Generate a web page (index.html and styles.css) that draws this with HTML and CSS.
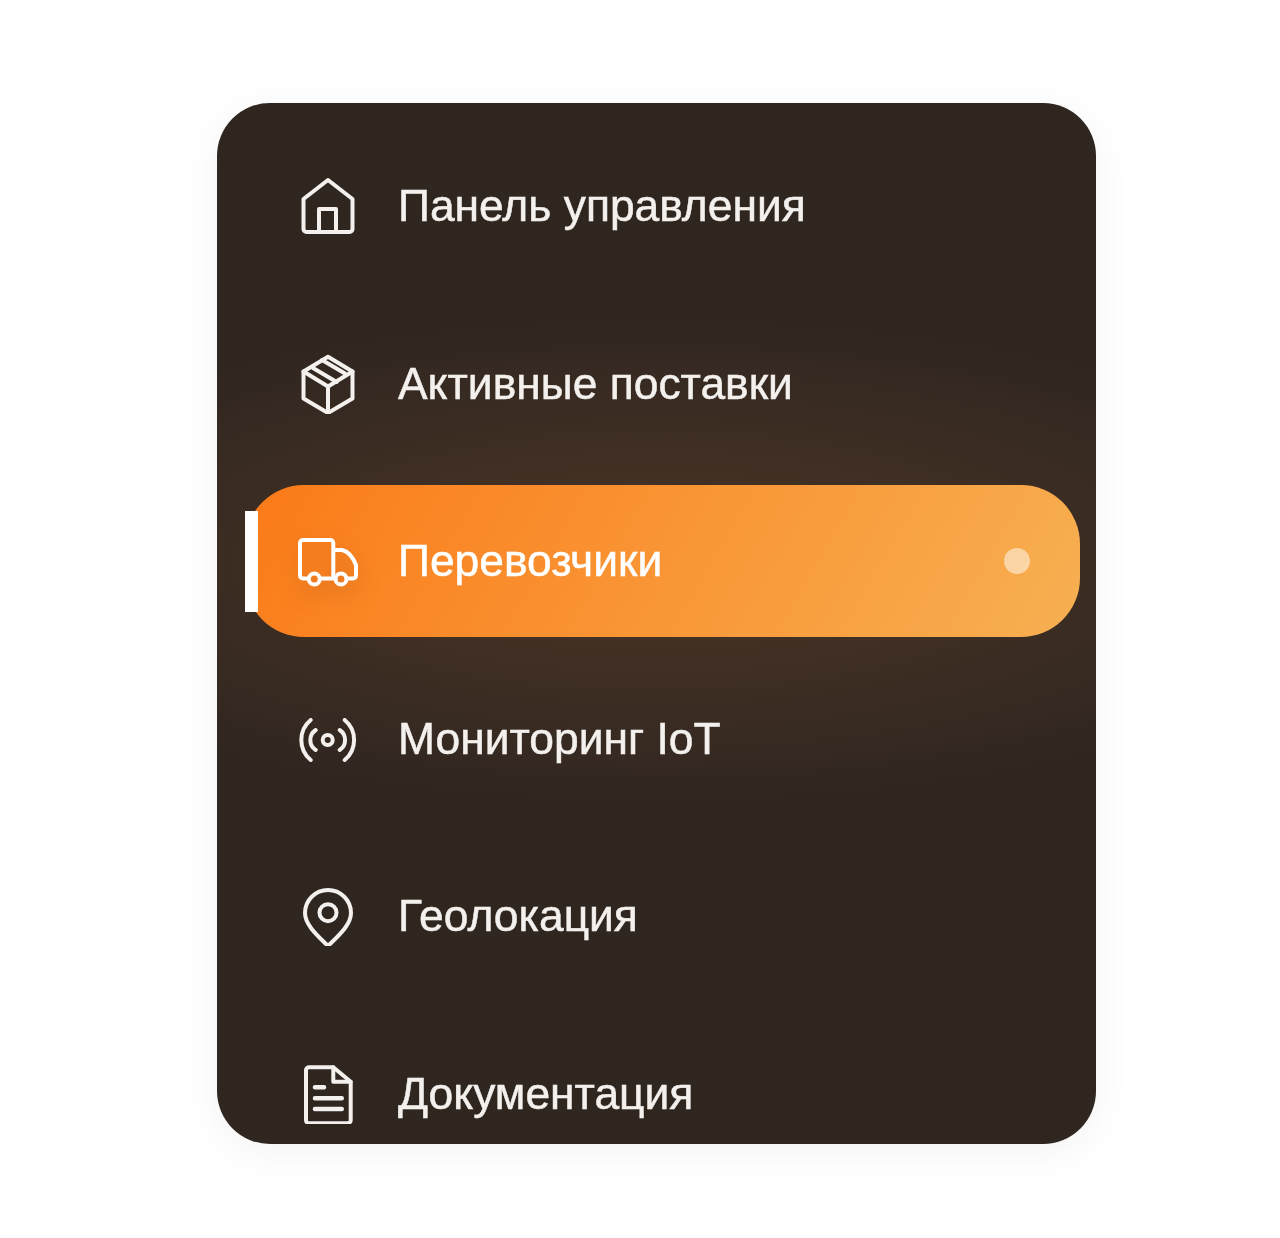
FILE: index.html
```html
<!DOCTYPE html>
<html lang="ru">
<head>
  <meta charset="UTF-8">
  <title>Перевозчики</title>
  <link rel="stylesheet" href="styles.css">
</head>
<body>
  <nav class="sidebar">
    <a class="nav-item">
      <svg class="nav-icon" viewBox="0 0 60 60"><path d="M5.500 23 30 4l24.500 19v30a3 3 0 0 1-3 3h-43a3 3 0 0 1-3-3z"/><path d="M21 56V33h17v23"/></svg>
      <span class="nav-label">Панель управления</span>
    </a>
    <a class="nav-item">
      <svg class="nav-icon" viewBox="0 0 60 60"><path d="M30 2.700 54.500 17.500v27L30 59 5.500 44.500v-27z"/><path d="M5.500 17.500 30 32.500l24.500-15M30 32.500V59"/><path d="M15 14 38.700 28M24 6l23 13.500"/></svg>
      <span class="nav-label">Активные поставки</span>
    </a>
    <a class="nav-item active">
      <svg class="nav-icon" viewBox="0 0 60 60"><path d="M10.500 47.500H5a3 3 0 0 1-3-3V12a3 3 0 0 1 3-3h27.300a3 3 0 0 1 3 3v35.500M22 47.500h15.500M35.300 19H44q9 2 14 15v10.500a3 3 0 0 1-3 3h-6.500"/><circle cx="16.300" cy="48" r="5.500"/><circle cx="43" cy="48" r="5.500"/></svg>
      <span class="nav-label">Перевозчики</span>
      <span class="nav-dot"></span>
    </a>
    <a class="nav-item">
      <svg class="nav-icon" viewBox="0 0 60 60"><circle cx="29.700" cy="31" r="5"/><path d="M17.700 21a12 12 0 0 0 0 20M41.700 21a12 12 0 0 1 0 20M12.700 11a26 26 0 0 0 0 40M46.700 11a26 26 0 0 1 0 40"/></svg>
      <span class="nav-label">Мониторинг IoT</span>
    </a>
    <a class="nav-item">
      <svg class="nav-icon" viewBox="0 0 60 60"><path d="M30 60C20 50 7 39 7 27a23 23 0 0 1 46 0c0 12-13 23-23 33z"/><circle cx="30" cy="26.700" r="8.500"/></svg>
      <span class="nav-label">Геолокация</span>
    </a>
    <a class="nav-item">
      <svg class="nav-icon" viewBox="0 0 60 60"><path d="M11 3.300h24.300l17.400 14.400v38.600a3 3 0 0 1-3 3H11a3 3 0 0 1-3-3v-50a3 3 0 0 1 3-3z"/><path d="M35.300 3.300v14.400h17.400"/><path class="doc-lines" d="M17 23.300h9M17 34.300h26.700M17 45h26.700"/></svg>
      <span class="nav-label">Документация</span>
    </a>
  </nav>
</body>
</html>
```

FILE: styles.css
```css
* {
  margin: 0;
  padding: 0;
  box-sizing: border-box;
}
html, body {
  height: 100%;
  background: #fff;
  font-family: "Liberation Sans", Arial, sans-serif;
}
body {
  padding: 103px 0 0 217px;
}
/* Dark card, the last row runs out of it */
.sidebar {
  width: 879px;
  height: 1041px;
  border-radius: 53px;
  overflow: hidden;
  padding: 27px 16px 0 28px;
  display: flex;
  flex-direction: column;
  gap: 25.6px;
  background:
    radial-gradient(ellipse 85% 24% at 50% 44%, #4c3526 0%, rgba(76, 53, 38, 0) 100%),
    #2f2620;
  box-shadow: 0 8px 40px rgba(0, 0, 0, 0.05);
}
.nav-item {
  position: relative;
  flex: 0 0 152px;
  display: flex;
  align-items: center;
  gap: 40px;
  padding: 0 50px 0 53px;
  border-radius: 59px;
  color: #f3f0ed;
  font-size: 44.4px;
  font-weight: 400;
  -webkit-text-stroke: 0.5px currentColor;
}
.nav-item.active {
  color: #fff;
  background: linear-gradient(120deg, #fb7a18 0%, #f7b052 100%);
}
/* White marker on the left edge of the active row */
.nav-item.active::before {
  content: "";
  position: absolute;
  left: 0;
  top: 26px;
  width: 13px;
  height: 101px;
  background: #fff;
}
.nav-icon {
  flex: none;
  width: 60px;
  height: 60px;
  fill: none;
  stroke: currentColor;
  stroke-width: 4;
  stroke-linecap: round;
  stroke-linejoin: round;
  filter: blur(0.5px);
}
.doc-lines {
  stroke-width: 4.6;
}
.active .nav-icon {
  filter: blur(0.5px) drop-shadow(0 8px 10px rgba(150, 80, 20, 0.35));
}
.nav-label {
  flex: 1;
  white-space: nowrap;
  filter: blur(0.5px);
}
.nav-dot {
  flex: none;
  width: 26px;
  height: 26px;
  border-radius: 50%;
  background: rgba(255, 255, 255, 0.5);
}
```
